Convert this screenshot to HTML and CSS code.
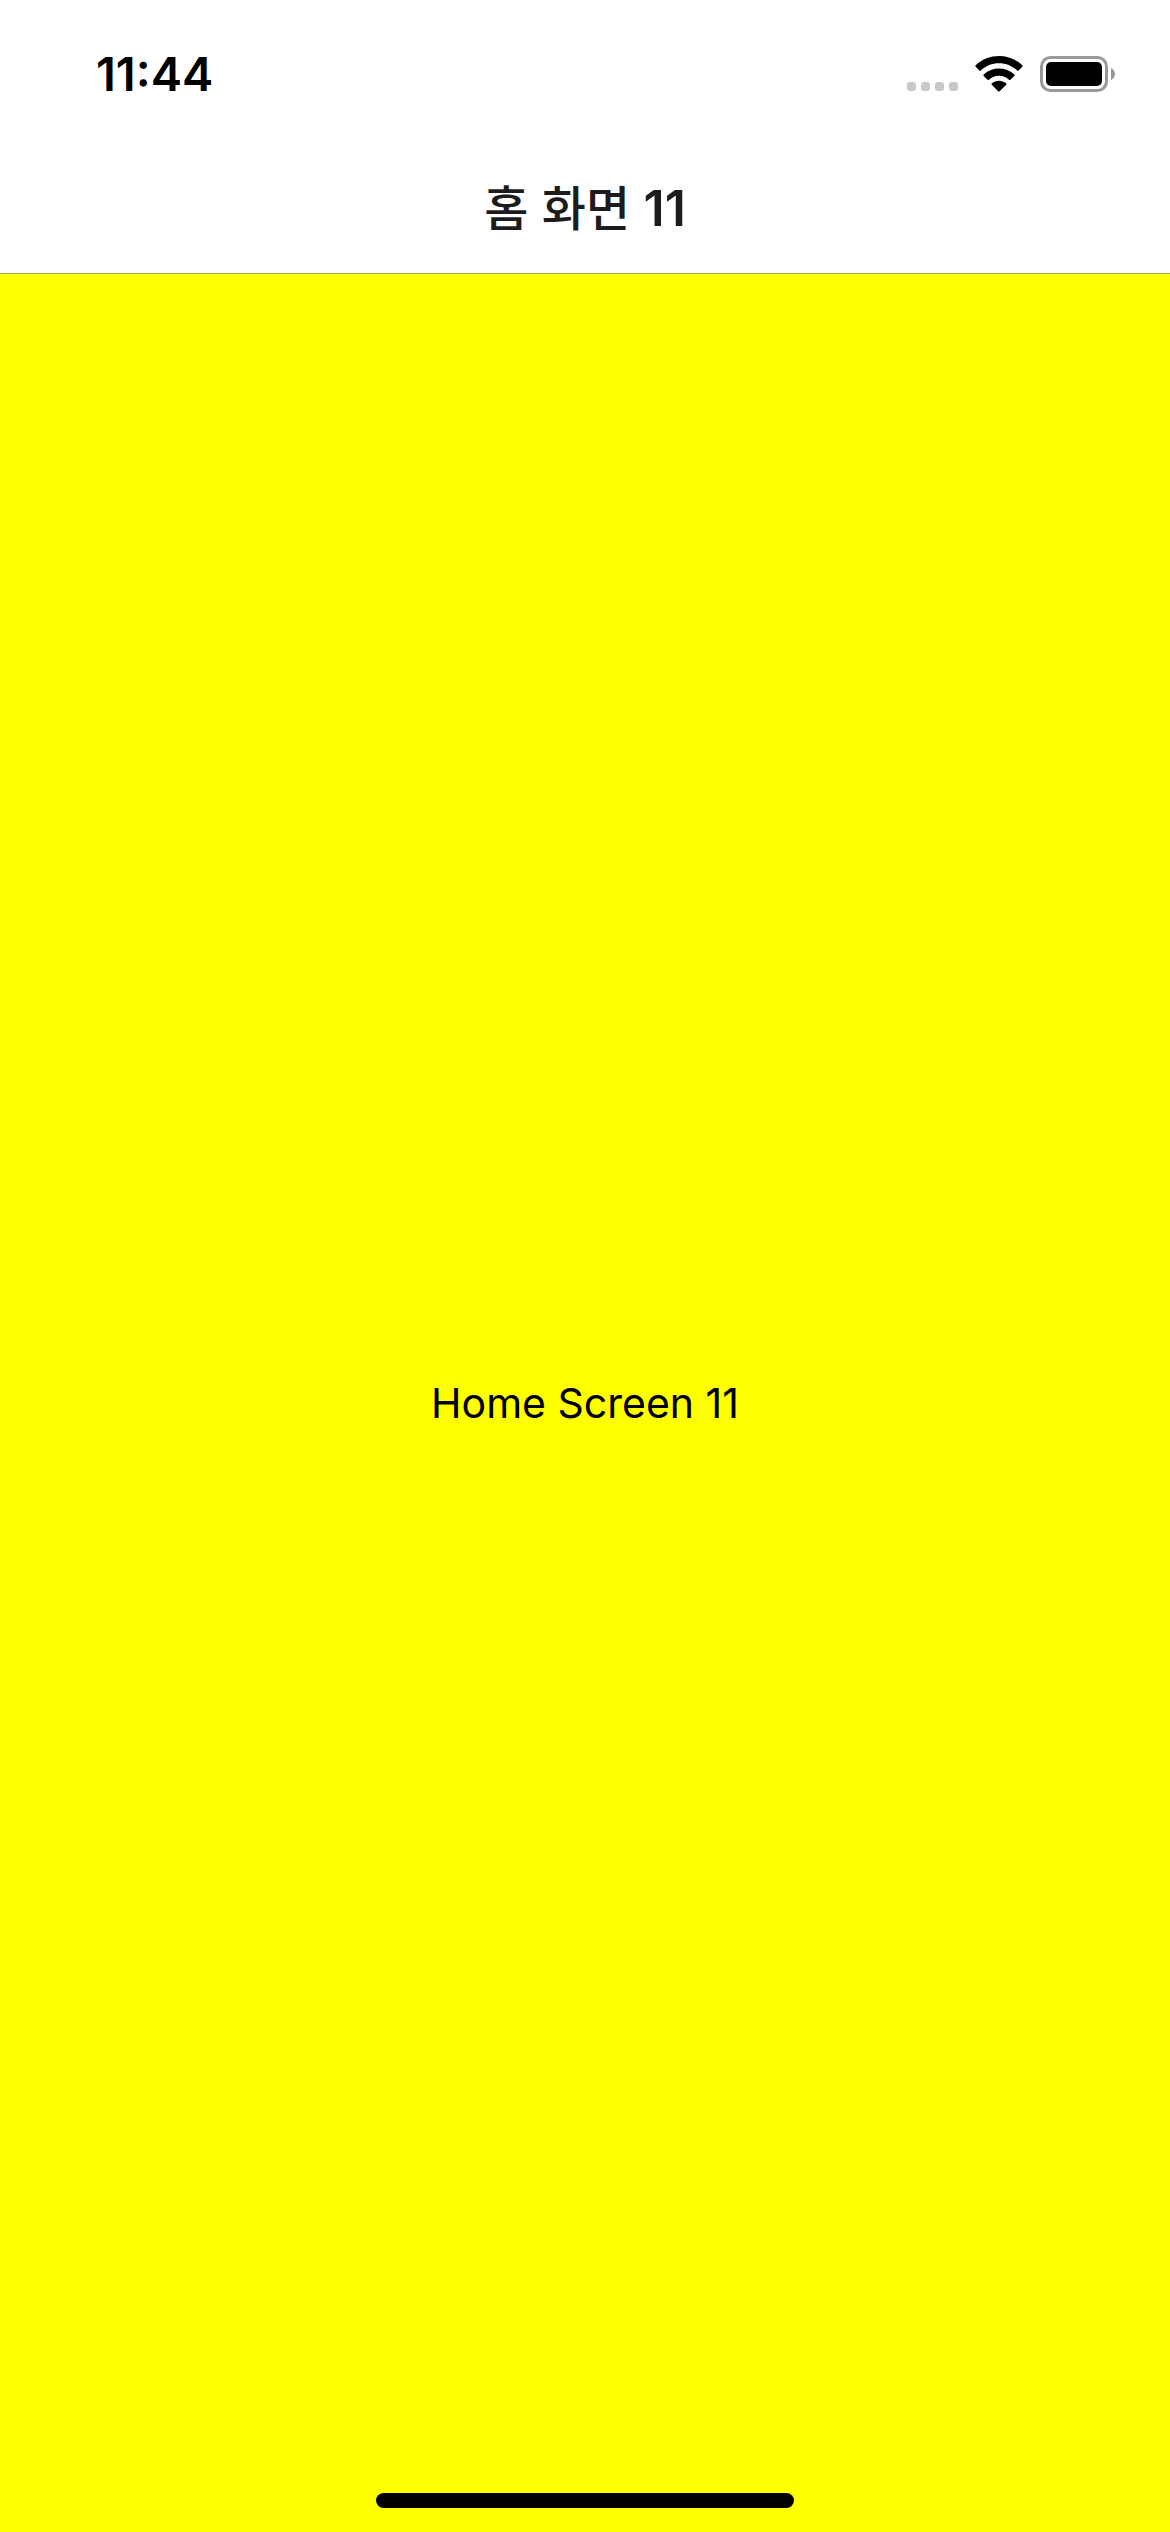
FILE: index.html
```html
<!DOCTYPE html>
<html lang="ko">
<head>
<meta charset="utf-8">
<meta name="viewport" content="width=device-width, initial-scale=1">
<title>홈 화면 11</title>
<link rel="stylesheet" href="styles.css">
</head>
<body>
<div class="screen">
  <div class="status-bar">
    <time class="clock">11:44</time>
    <div class="indicators">
      <svg class="cellular" viewBox="0 0 54 10" aria-hidden="true">
        <rect x="3" width="9" height="9" rx="3"/><rect x="17" width="9" height="9" rx="3"/><rect x="31" width="9" height="9" rx="3"/><rect x="45" width="9" height="9" rx="3"/>
      </svg>
      <svg class="wifi" viewBox="0 0 50 36" aria-hidden="true">
        <path d="M25 7.2c6.8 0 13.300 2.600 18.200 7.200.4.4 1 .4 1.400 0l3.700-3.700c.4-.4.4-1.100 0-1.500C35.300-3 14.700-3 1.700 9.200c-.4.4-.4 1.100 0 1.500l3.700 3.700c.4.4 1 .4 1.400 0C11.700 9.800 18.200 7.200 25 7.200z"/>
        <path d="M25 19.800c3.700 0 7.300 1.400 10 3.900.4.4 1 .4 1.400 0l3.900-3.800c.4-.4.4-1.100 0-1.500-8.700-7.900-21.900-7.900-30.600 0-.4.4-.4 1.100 0 1.500l3.900 3.800c.4.4 1 .4 1.400 0 2.700-2.500 6.300-3.900 9.999-3.900z"/>
        <path d="M32.200 28.800c.4-.4.4-1.100 0-1.500-4.200-3.500-10.200-3.500-14.400 0-.4.4-.4 1.100 0 1.500l6.400 6.500c.4.4 1.100.4 1.500 0z"/>
      </svg>
      <svg class="battery" viewBox="0 0 76 36" aria-hidden="true">
        <rect class="battery-case" x="1.500" y="1.500" width="65" height="33" rx="9"/>
        <rect x="6" y="6" width="56" height="24" rx="5"/>
        <path class="battery-cap" d="M71 12v12c2.500-1 4-3.500 4-6s-1.500-5-4-6z"/>
      </svg>
    </div>
  </div>
  <header class="nav-bar"><h1 class="nav-title">홈 화면 <span class="nav-number">11</span></h1></header>
  <main class="content"><p class="message">Home Screen 11</p></main>
  <div class="home-indicator"></div>
</div>
</body>
</html>
```
FILE: styles.css
```css
* { box-sizing: border-box; }
body {
  margin: 0;
  background: #ffff00;
  color: #000;
  font-family: Inter, "Noto Sans CJK KR", sans-serif;
}
.screen {
  position: relative;
  display: flex;
  flex-direction: column;
  min-height: 100vh;
}
.status-bar {
  display: flex;
  justify-content: space-between;
  height: 140px;
  padding: 47px 54px 0 96px;
  background: #fff;
}
.clock { font-size: 47px; line-height: 54px; font-weight: 600; }
.indicators { display: flex; align-items: flex-start; gap: 16px; padding-top: 9px; }
.cellular { width: 54px; height: 10px; margin-top: 26px; fill: #c8c8c8; }
.wifi { width: 50px; height: 36px; }
.battery { width: 76px; height: 36px; }
.battery-case { fill: none; stroke: #999; stroke-width: 3; }
.battery-cap { fill: #999; }
.nav-bar {
  display: flex;
  align-items: center;
  justify-content: center;
  height: 134px;
  border-bottom: 1px solid #a7a74e;
  background: #fff;
}
.nav-title {
  margin: 0;
  color: #1c1c1e;
  font-family: "Noto Sans CJK KR", sans-serif;
  font-size: 48px;
  line-height: 60px;
  font-weight: 500;
}
.nav-number { font-family: Inter, sans-serif; font-size: 50px; font-weight: 600; }
.content { flex: 1; display: flex; align-items: center; justify-content: center; }
.message { margin: 0; font-size: 41px; line-height: 52px; }
.home-indicator {
  position: absolute;
  bottom: 24px;
  left: 50%;
  width: 418px;
  height: 15px;
  border-radius: 8px;
  background: #000;
  transform: translateX(-50%);
}
```
